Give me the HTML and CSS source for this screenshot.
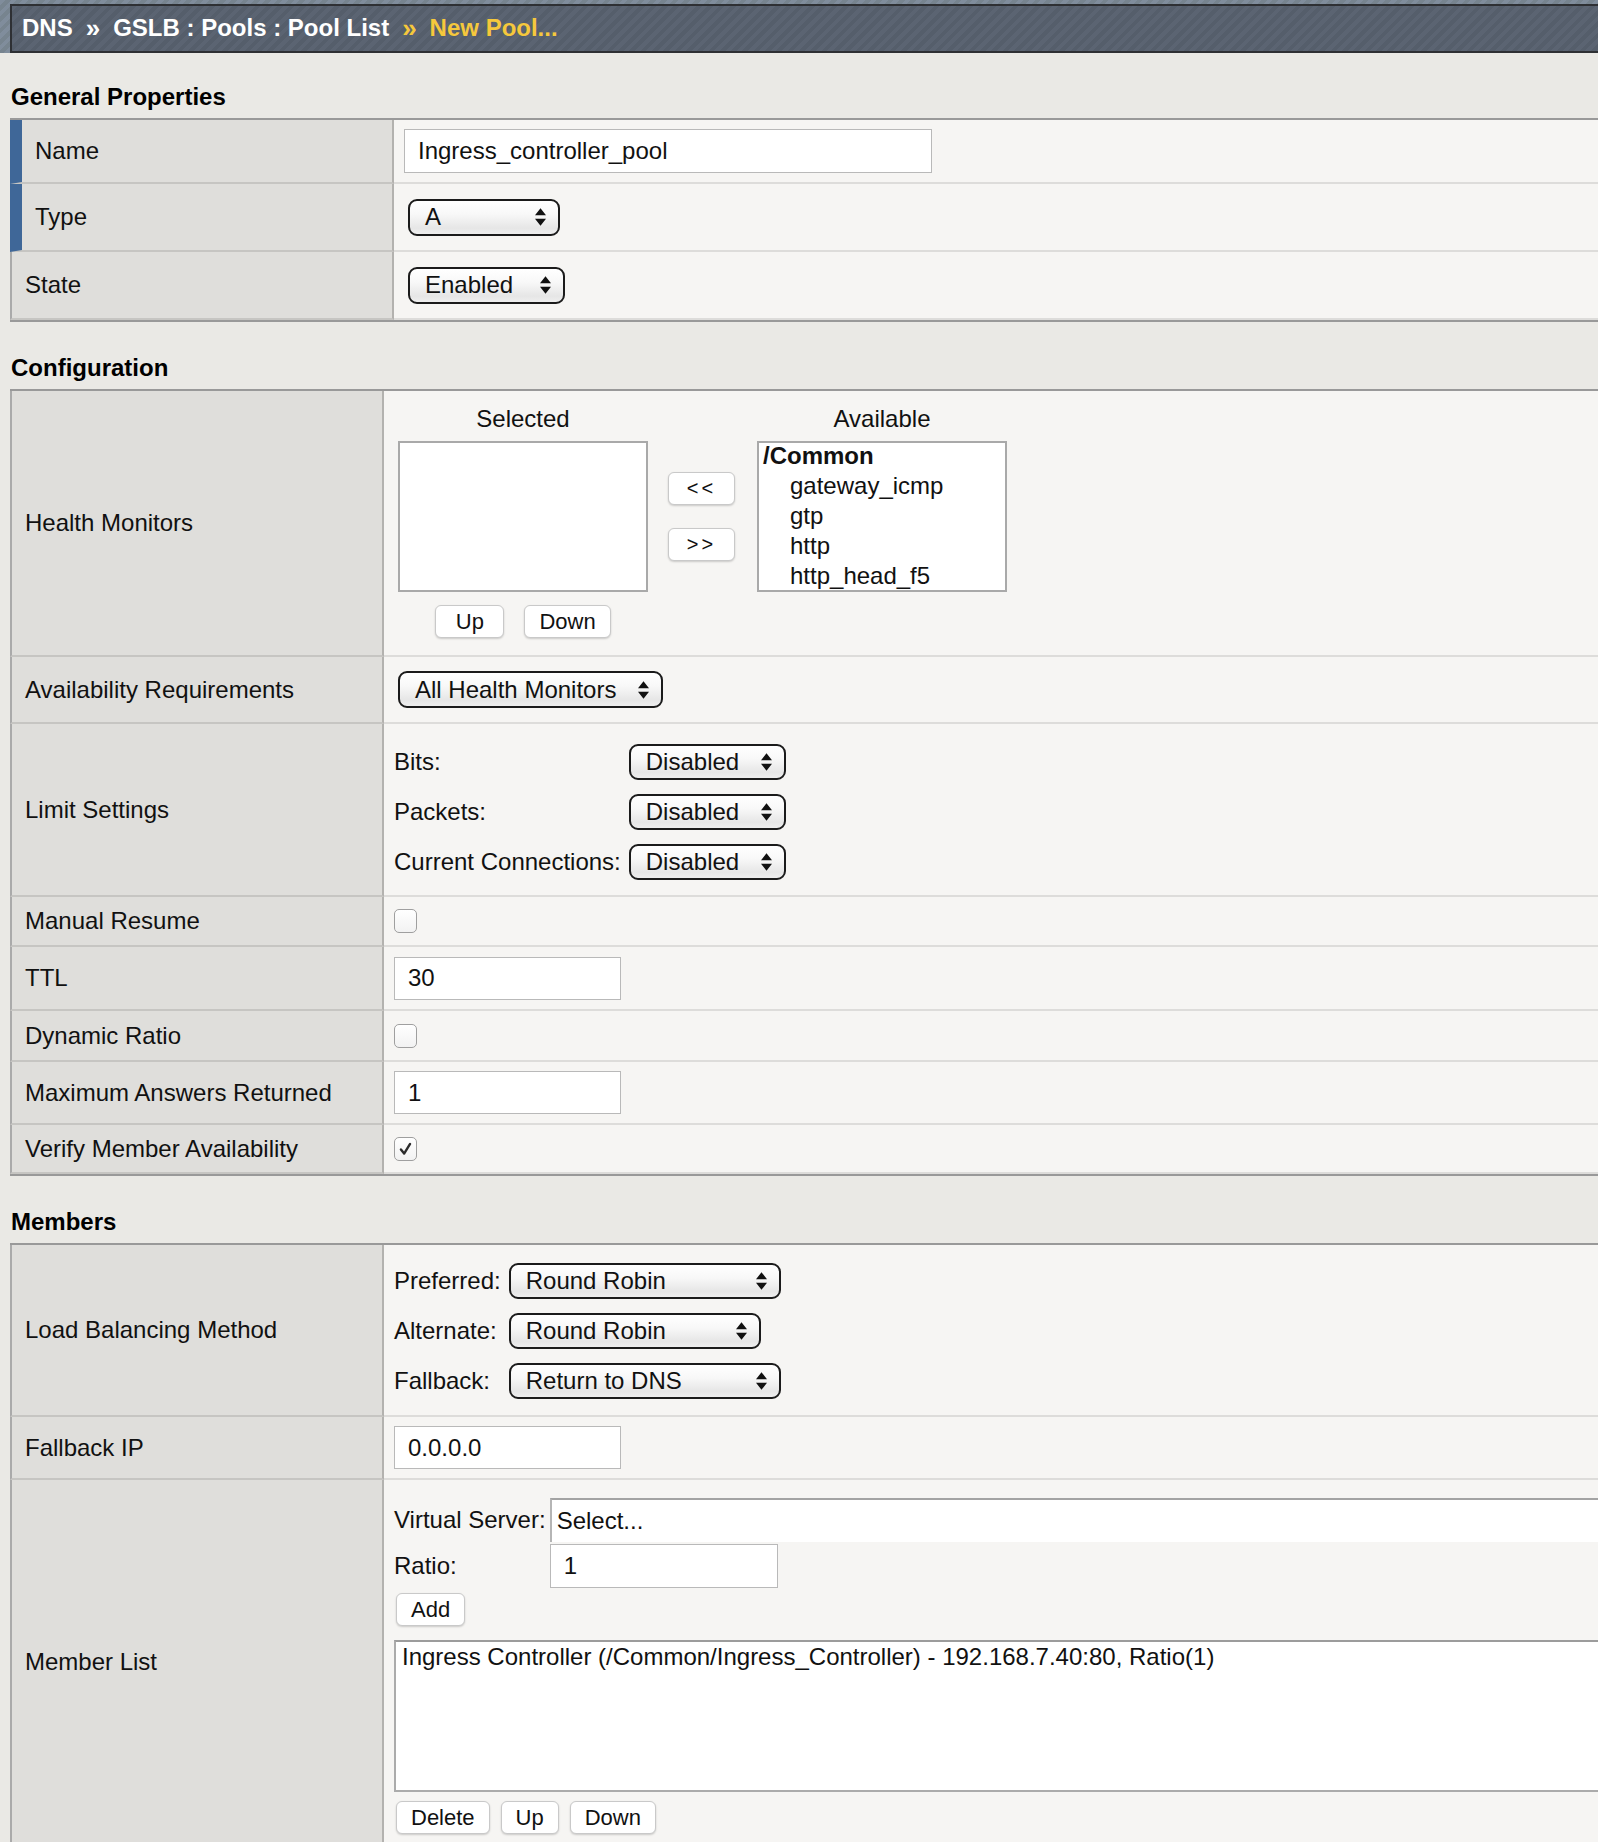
FILE: index.html
```html
<!DOCTYPE html>
<html lang="en">
<head>
<meta charset="utf-8">
<title>DNS » GSLB : Pools : Pool List » New Pool...</title>
<link rel="stylesheet" href="styles.css">
</head>
<body>
<div class="topbar">
  <div class="crumbs">
    <span>DNS</span><span class="sep">»</span><span>GSLB : Pools : Pool List</span><span class="sep cur">»</span><span class="cur">New Pool...</span>
  </div>
</div>

<main class="page">
  <h2 class="sec first">General Properties</h2>
  <div class="props gen">
    <div class="row h-name">
      <div class="lbl req">Name</div>
      <div class="val"><input class="tin w-name" type="text" value="Ingress_controller_pool"></div>
    </div>
    <div class="row h-type">
      <div class="lbl req">Type</div>
      <div class="val">
        <div class="sel w-a"><span>A</span><svg class="arr" viewBox="0 0 10 16" width="11" height="18"><path d="M5 0L10 6.5H0ZM0 9.5H10L5 16Z"/></svg></div>
      </div>
    </div>
    <div class="row h-type">
      <div class="lbl">State</div>
      <div class="val">
        <div class="sel w-en"><span>Enabled</span><svg class="arr" viewBox="0 0 10 16" width="11" height="18"><path d="M5 0L10 6.5H0ZM0 9.5H10L5 16Z"/></svg></div>
      </div>
    </div>
  </div>

  <h2 class="sec">Configuration</h2>
  <div class="props">
    <div class="row h-hm">
      <div class="lbl">Health Monitors</div>
      <div class="val top hm-val">
        <div class="hm">
          <div class="hm-col first-col">
            <div class="hm-title">Selected</div>
            <div class="listbox"></div>
            <div class="hm-btns">
              <button class="btn w-up">Up</button>
              <button class="btn">Down</button>
            </div>
          </div>
          <div class="hm-mid">
            <button class="btn w-mv">&lt;&lt;</button>
            <button class="btn w-mv">&gt;&gt;</button>
          </div>
          <div class="hm-col">
            <div class="hm-title">Available</div>
            <div class="listbox avail">
              <div class="grp">/Common</div>
              <div class="opt">gateway_icmp</div>
              <div class="opt">gtp</div>
              <div class="opt">http</div>
              <div class="opt">http_head_f5</div>
            </div>
          </div>
        </div>
      </div>
    </div>
    <div class="row h-avail">
      <div class="lbl">Availability Requirements</div>
      <div class="val">
        <div class="sel w-ahm"><span>All Health Monitors</span><svg class="arr" viewBox="0 0 10 16" width="11" height="18"><path d="M5 0L10 6.5H0ZM0 9.5H10L5 16Z"/></svg></div>
      </div>
    </div>
    <div class="row h-limit">
      <div class="lbl">Limit Settings</div>
      <div class="val top limit-val">
        <div class="kv">
          <span>Bits:</span>
          <div class="sel s36 w-dis"><span>Disabled</span><svg class="arr" viewBox="0 0 10 16" width="11" height="18"><path d="M5 0L10 6.5H0ZM0 9.5H10L5 16Z"/></svg></div>
          <span>Packets:</span>
          <div class="sel s36 w-dis"><span>Disabled</span><svg class="arr" viewBox="0 0 10 16" width="11" height="18"><path d="M5 0L10 6.5H0ZM0 9.5H10L5 16Z"/></svg></div>
          <span>Current Connections:</span>
          <div class="sel s36 w-dis"><span>Disabled</span><svg class="arr" viewBox="0 0 10 16" width="11" height="18"><path d="M5 0L10 6.5H0ZM0 9.5H10L5 16Z"/></svg></div>
        </div>
      </div>
    </div>
    <div class="row h-manual">
      <div class="lbl">Manual Resume</div>
      <div class="val"><span class="cb"></span></div>
    </div>
    <div class="row h-ttl">
      <div class="lbl">TTL</div>
      <div class="val"><input class="tin w-num" type="text" value="30"></div>
    </div>
    <div class="row h-dyn">
      <div class="lbl">Dynamic Ratio</div>
      <div class="val"><span class="cb"></span></div>
    </div>
    <div class="row h-max">
      <div class="lbl">Maximum Answers Returned</div>
      <div class="val"><input class="tin w-num" type="text" value="1"></div>
    </div>
    <div class="row h-verify">
      <div class="lbl">Verify Member Availability</div>
      <div class="val"><span class="cb"><svg viewBox="0 0 23 24" width="21" height="22"><path d="M6.5 12.5L10 17L16.5 6.5" fill="none" stroke="#2b2b2b" stroke-width="2.6" stroke-linecap="round" stroke-linejoin="round"/></svg></span></div>
    </div>
  </div>

  <h2 class="sec">Members</h2>
  <div class="props">
    <div class="row h-lb">
      <div class="lbl">Load Balancing Method</div>
      <div class="val top lb-val">
        <div class="kv">
          <span>Preferred:</span>
          <div class="sel s36 w-rr"><span>Round Robin</span><svg class="arr" viewBox="0 0 10 16" width="11" height="18"><path d="M5 0L10 6.5H0ZM0 9.5H10L5 16Z"/></svg></div>
          <span>Alternate:</span>
          <div class="sel s36 w-rr2"><span>Round Robin</span><svg class="arr" viewBox="0 0 10 16" width="11" height="18"><path d="M5 0L10 6.5H0ZM0 9.5H10L5 16Z"/></svg></div>
          <span>Fallback:</span>
          <div class="sel s36 w-rr"><span>Return to DNS</span><svg class="arr" viewBox="0 0 10 16" width="11" height="18"><path d="M5 0L10 6.5H0ZM0 9.5H10L5 16Z"/></svg></div>
        </div>
      </div>
    </div>
    <div class="row h-fip">
      <div class="lbl">Fallback IP</div>
      <div class="val"><input class="tin w-num" type="text" value="0.0.0.0"></div>
    </div>
    <div class="row h-ml">
      <div class="lbl">Member List</div>
      <div class="val top ml-val">
        <div class="vs">
          <span>Virtual Server:</span>
          <div class="combo">Select...</div>
          <span>Ratio:</span>
          <input class="tin w-ratio" type="text" value="1">
        </div>
        <button class="btn add">Add</button>
        <div class="members">Ingress Controller (/Common/Ingress_Controller) - 192.168.7.40:80, Ratio(1)</div>
        <div class="ml-btns">
          <button class="btn">Delete</button>
          <button class="btn">Up</button>
          <button class="btn">Down</button>
        </div>
      </div>
    </div>
  </div>
</main>
</body>
</html>
```

FILE: styles.css
```css
* { box-sizing: border-box; }

html { overflow: hidden; }

body {
  margin: 0;
  width: 1800px;
  background: #eae9e5;
  font-family: "Liberation Sans", Arial, Helvetica, sans-serif;
  font-size: 24px;
  line-height: 28px;
  color: #111;
}

/* ---------- breadcrumb bar ---------- */
.topbar {
  height: 53px;
  padding: 4px 0 0 10px;
  background: repeating-linear-gradient(135deg, #808d9c 0 4px, #77848f 4px 8px);
}
.crumbs {
  height: 49px;
  display: flex;
  align-items: center;
  padding-left: 10px;
  padding-bottom: 2px;
  border: 2px solid #2e3034;
  border-right: 0;
  background: repeating-linear-gradient(135deg, #5b6472 0 4px, #555e6b 4px 8px);
  color: #fff;
  font-weight: bold;
  font-size: 24px;
  white-space: nowrap;
}
.crumbs .sep { margin: 0 13px; font-size: 26px; }
.crumbs .cur { color: #f6c83c; }

/* ---------- section headings ---------- */
.sec {
  margin: 0;
  padding: 32px 0 7px 11px;
  font-size: 24px;
  line-height: 28px;
  font-weight: bold;
  color: #000;
}
.sec.first { padding-top: 30px; }

/* ---------- property tables ---------- */
.props {
  margin-left: 10px;
  border-top: 2px solid #999;
  border-bottom: 2px solid #999;
}
.row { display: flex; }
.lbl {
  flex: none;
  width: 374px;
  display: flex;
  align-items: center;
  padding-left: 13px;
  background: #dfdedb;
  border-left: 2px solid #aaa;
  border-right: 2px solid #b3b2af;
  border-bottom: 2px solid #c6c5c2;
  white-space: nowrap;
}
.gen .lbl { width: 384px; }
.lbl.req { border-left: 12px solid #3f6798; }
.val {
  flex: 1;
  display: flex;
  align-items: center;
  padding-left: 10px;
  background: #f6f5f3;
  border-bottom: 2px solid #dddcda;
  white-space: nowrap;
}
.val.top { align-items: flex-start; flex-direction: column; }

.h-name { height: 64px; }
.h-type { height: 68px; }
.h-hm { height: 266px; }
.h-avail { height: 67px; }
.h-limit { height: 173px; }
.h-manual { height: 50px; }
.h-ttl { height: 64px; }
.h-dyn { height: 51px; }
.h-max { height: 63px; }
.h-verify { height: 49px; }
.h-lb { height: 172px; }
.h-fip { height: 63px; }
.h-ml { height: 366px; }

/* ---------- inputs ---------- */
.tin {
  display: block;
  margin: 0;
  height: 44px;
  padding: 0 0 0 13px;
  border: 1px solid #b9b9b9;
  background: #fff;
  font: inherit;
  color: #111;
  outline: none;
}
.w-name { width: 528px; }
.w-num { width: 227px; height: 43px; }
.w-ratio { width: 228px; }

/* ---------- selects ---------- */
.sel {
  display: flex;
  align-items: center;
  justify-content: space-between;
  height: 37px;
  margin-left: 4px;
  padding: 0 12px 0 15px;
  border: 2px solid #1b1b1b;
  border-radius: 9px;
  background: linear-gradient(#ffffff 0%, #f8f8f8 40%, #e6e6e6 82%, #eeeeee 100%);
  color: #111;
}
.sel.s36 { height: 36px; }
.sel .arr { flex: none; fill: #111; }
.w-a { width: 152px; }
.w-en { width: 157px; }
.w-ahm { width: 265px; }
.w-dis { width: 157px; }
.w-rr { width: 272px; }
.w-rr2 { width: 252px; }

/* ---------- buttons ---------- */
.btn {
  display: inline-flex;
  align-items: center;
  justify-content: center;
  height: 33px;
  margin: 0;
  padding: 0 14px;
  border: 1px solid #c9c9c9;
  border-radius: 6px;
  background: #fff;
  box-shadow: 0 1px 2px rgba(0, 0, 0, 0.18);
  font-family: inherit;
  font-size: 22px;
  color: #111;
}
.w-up { width: 69px; }
.w-mv { width: 67px; padding: 0; letter-spacing: 3px; font-size: 20px; }

/* ---------- health monitors ---------- */
.hm-val { padding-top: 14px; }
.hm { display: flex; align-items: flex-start; }
.hm-col {
  width: 250px;
  display: flex;
  flex-direction: column;
  align-items: center;
}
.hm-col.first-col { margin-left: 4px; }
.hm-title { height: 28px; line-height: 28px; }
.listbox {
  align-self: stretch;
  margin-top: 8px;
  height: 151px;
  border: 2px solid #a9a9a9;
  background: #fff;
  overflow: hidden;
}
.listbox.avail { line-height: 30px; padding-left: 4px; }
.listbox .grp { font-weight: bold; margin-top: -2px; }
.listbox .opt { padding-left: 27px; }
.hm-btns { display: flex; gap: 20px; margin-top: 13px; }
.hm-mid {
  width: 67px;
  height: 151px;
  margin: 36px 22px 0 20px;
  display: flex;
  flex-direction: column;
  justify-content: center;
  gap: 23px;
}

/* ---------- label/select grids ---------- */
.limit-val { padding-top: 20px; }
.lb-val { padding-top: 18px; }
.kv {
  display: grid;
  grid-template-columns: auto auto;
  column-gap: 4px;
  row-gap: 14px;
  align-items: center;
  justify-items: start;
}

/* ---------- checkboxes ---------- */
.cb {
  display: inline-flex;
  align-items: center;
  justify-content: center;
  width: 23px;
  height: 24px;
  border: 1px solid #9f9f9f;
  border-radius: 5px;
  background: linear-gradient(#fff, #f2f2f2);
}

/* ---------- member list ---------- */
.ml-val { padding-top: 18px; }
.vs {
  display: grid;
  grid-template-columns: auto auto;
  column-gap: 4px;
  row-gap: 2px;
  align-items: center;
  justify-items: start;
}
.combo {
  width: 1200px;
  height: 44px;
  padding-left: 5px;
  display: flex;
  align-items: center;
  background: #fff;
  border-top: 2px solid #a3a3a3;
  border-left: 2px solid #b5b5b5;
}
.btn.add { margin: 5px 0 0 2px; }
.members {
  margin-top: 14px;
  width: 1300px;
  height: 152px;
  padding: 1px 0 0 6px;
  background: #fff;
  border: 2px solid #ababab;
  border-top-color: #9c9c9c;
}
.ml-btns { display: flex; gap: 11px; margin: 9px 0 0 2px; }
```
